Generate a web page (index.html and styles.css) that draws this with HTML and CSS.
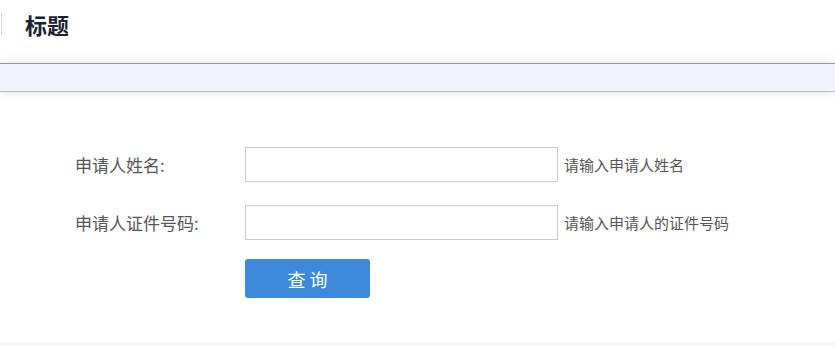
FILE: index.html
```html
<!DOCTYPE html>
<html lang="zh-CN">
<head>
    <meta charset="UTF-8">
    <meta name="viewport" content="width=device-width, initial-scale=1.0">
    <title>标题</title>
    <link rel="stylesheet" href="styles.css">
</head>
<body>

    <div class="page-header">
        <h1 class="page-title">标题</h1>
    </div>

    <div class="toolbar"></div>

    <form class="query-form">
        <div class="form-row">
            <label class="form-label" for="name">申请人姓名:</label>
            <input class="form-input" id="name" type="text">
            <span class="form-hint">请输入申请人姓名</span>
        </div>
        <div class="form-row">
            <label class="form-label" for="idno">申请人证件号码:</label>
            <input class="form-input" id="idno" type="text">
            <span class="form-hint">请输入申请人的证件号码</span>
        </div>
        <div class="form-row">
            <span class="form-label"></span>
            <button class="btn-query" type="button">查询</button>
        </div>
    </form>

    <div class="page-footer"></div>

</body>
</html>
```

FILE: styles.css
```css
/* --- Base --- */
body {
    margin: 0;
    height: 346px;
    overflow: hidden;
    background: #fff;
    font-family: "Noto Sans CJK SC", "Liberation Sans", sans-serif;
    color: #555;
    display: flex;
    flex-direction: column;
}

/* --- Header --- */
.page-header {
    height: 63px;
    display: flex;
    align-items: flex-start;
    padding-top: 13px;
    box-sizing: border-box;
}

.page-title {
    margin: 0;
    padding-left: 23px;
    border-left: 1px solid #d8d8d8;
    margin-left: 1px;
    height: 22px;
    line-height: 22px;
    font-size: 22px;
    font-weight: 700;
    color: #1a2230;
}

/* --- Blue band under header --- */
.toolbar {
    height: 27px;
    background: #f0f5fd;
    border-top: 1px solid #9299a5;
    border-bottom: 1px solid #b9bec6;
    box-shadow: 0 0 12px rgba(0, 0, 0, 0.12);
}

/* --- Form --- */
.query-form {
    flex: 1;
    padding: 55px 0 0 75px;
    display: flex;
    flex-direction: column;
    gap: 23px;
}

.form-row {
    display: flex;
    align-items: center;
}

.form-label {
    width: 170px;
    font-size: 17px;
    color: #555;
}

.form-input {
    width: 313px;
    height: 35px;
    box-sizing: border-box;
    margin: 0;
    border: 1px solid #ccc;
    border-radius: 0;
    padding: 0 6px;
    font-family: inherit;
    outline: none;
}

.form-hint {
    margin-left: 6px;
    font-size: 15px;
    color: #555;
}

.btn-query {
    margin-top: -4px;
    width: 125px;
    height: 39px;
    border: none;
    border-radius: 3px;
    background: #3c89da;
    color: #fff;
    font-family: inherit;
    font-size: 18px;
    letter-spacing: 4px;
    padding-left: 10px;
    cursor: pointer;
}

/* --- Footer edge --- */
.page-footer {
    height: 4px;
    background: #f8f8f8;
}
```
